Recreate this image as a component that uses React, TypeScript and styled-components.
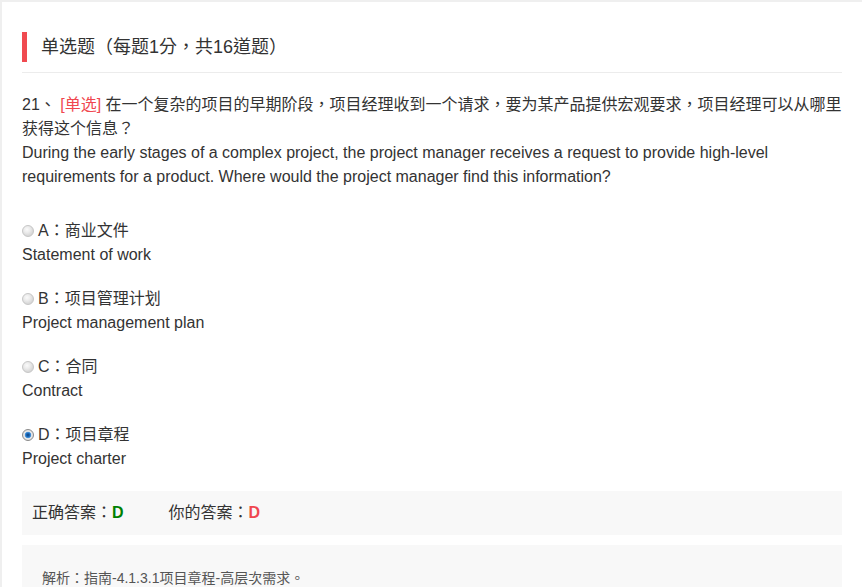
import React from "react";
import styled, { createGlobalStyle } from "styled-components";

const Global = createGlobalStyle`
  html, body { margin: 0; padding: 0; background: #efefef; }
  body { font-family: "Liberation Sans", Arial, "Noto Sans CJK TC", "Noto Sans CJK SC", sans-serif; color: #333; }
`;

const Panel = styled.div`
  margin: 2px 0 0 2px;
  background: #fff;
  padding: 30px 20px 0 20px;
  min-height: 585px;
  box-sizing: border-box;
`;

const Header = styled.div`
  padding-bottom: 10px;
  border-bottom: 1px solid #ececec;
`;

const Title = styled.h2`
  margin: 0;
  border-left: 5px solid #f04a50;
  padding-left: 14px;
  height: 30px;
  line-height: 30px;
  font-size: 18px;
  font-weight: normal;
  color: #333;
`;

const Question = styled.div`
  margin-top: 20px;
  font-size: 16px;
  line-height: 24px;
`;

const Tag = styled.span`
  color: #f0474f;
`;

const Options = styled.div`
  margin-top: 30px;
  display: flex;
  flex-direction: column;
  gap: 20px;
`;

const Option = styled.div`
  font-size: 16px;
  line-height: 24px;
`;

const OptLine = styled.div`
  display: flex;
  align-items: center;
`;

const Radio = styled.span<{ $checked?: boolean }>`
  width: 12px;
  height: 12px;
  border-radius: 50%;
  box-sizing: border-box;
  margin-right: 4px;
  flex: none;
  border: 1px solid ${(p) => (p.$checked ? "#8a8a8a" : "#c6c6c6")};
  background: ${(p) =>
    p.$checked
      ? "radial-gradient(circle at 50% 50%, #0b3f7a 0, #1f6fc0 2px, #5aa0e0 3px, #e8e8e8 3.6px, #dcdcdc 6px)"
      : "radial-gradient(circle at 40% 35%, #fafafa 0, #ececec 3px, #d8d8d8 6px)"};
`;

const AnswerBox = styled.div`
  margin-top: 20px;
  background: #f8f8f8;
  height: 44px;
  line-height: 44px;
  padding: 0 10px;
  font-size: 16px;
  display: flex;
  gap: 45px;
`;

const Mark = styled.b<{ $color: string }>`
  color: ${(p) => p.$color};
`;

const Analysis = styled.div`
  margin-top: 10px;
  background: #f8f8f8;
  padding: 20px;
  font-size: 14px;
  line-height: 26px;
  color: #555;
`;

const options = [
  { key: "A", cn: "商业文件", en: "Statement of work" },
  { key: "B", cn: "项目管理计划", en: "Project management plan" },
  { key: "C", cn: "合同", en: "Contract" },
  { key: "D", cn: "项目章程", en: "Project charter", checked: true },
];

export default function App() {
  return (
    <>
      <Global />
      <Panel>
        <Header>
          <Title>单选题（每题1分，共16道题）</Title>
        </Header>
        <Question>
          21、 <Tag>[单选]</Tag> 在一个复杂的项目的早期阶段，项目经理收到一个请求，要为某产品提供宏观要求，项目经理可以从哪里获得这个信息？
          <br />
          During the early stages of a complex project, the project manager receives a request to provide high-level requirements for a product. Where would the project manager find this information?
        </Question>
        <Options>
          {options.map((o) => (
            <Option key={o.key}>
              <OptLine>
                <Radio $checked={o.checked} />
                {o.key}：{o.cn}
              </OptLine>
              <div>{o.en}</div>
            </Option>
          ))}
        </Options>
        <AnswerBox>
          <span>
            正确答案：<Mark $color="#008000">D</Mark>
          </span>
          <span>
            你的答案：<Mark $color="#f0474f">D</Mark>
          </span>
        </AnswerBox>
        <Analysis>解析：指南-4.1.3.1项目章程-高层次需求。</Analysis>
      </Panel>
    </>
  );
}
